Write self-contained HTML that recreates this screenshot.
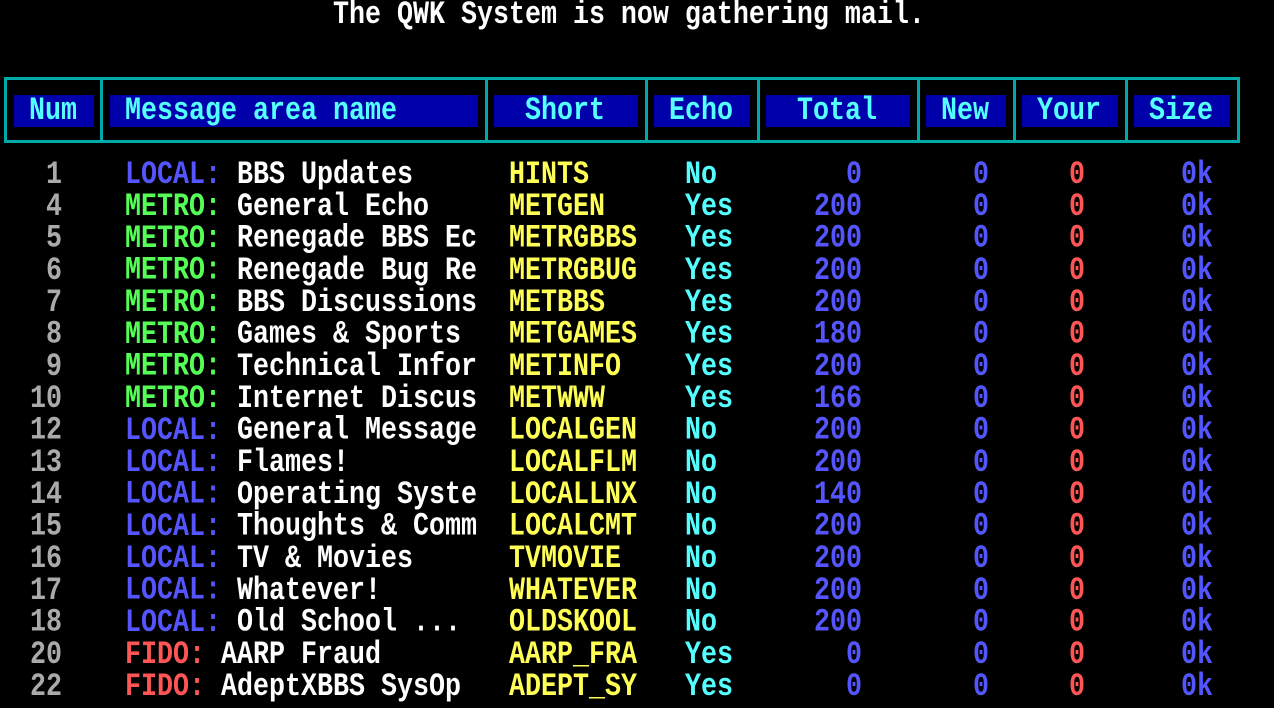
<!DOCTYPE html>
<html><head><meta charset="utf-8"><style>
body{margin:0;width:1274px;height:708px;background:#000;overflow:hidden;position:relative;font-family:"Liberation Mono",monospace;font-size:26.67px;font-weight:bold}
span{position:absolute;white-space:pre;line-height:26.667px;transform:scaleY(1.2);transform-origin:0 0}
div{position:absolute}
.b{background:#0000aa;height:32px;top:95px}
.v{background:#00aaaa;width:3px;top:77px;height:66px}
.h{color:#55ffff;top:96px}
.r{text-align:right}
</style></head><body>
<span style="left:333px;top:0px;color:#fff">The QWK System is now gathering mail.</span>
<div style="left:4px;top:77px;width:1235px;height:3px;background:#00aaaa"></div>
<div style="left:4px;top:140px;width:1235px;height:3px;background:#00aaaa"></div>
<div class="v" style="left:4px"></div><div class="v" style="left:100px"></div><div class="v" style="left:485px"></div><div class="v" style="left:645px"></div><div class="v" style="left:757px"></div><div class="v" style="left:917px"></div><div class="v" style="left:1013px"></div><div class="v" style="left:1125px"></div><div class="v" style="left:1237px"></div>
<div class="b" style="left:14px;width:80px"></div>
<div class="b" style="left:110px;width:368px"></div>
<div class="b" style="left:494px;width:144px"></div>
<div class="b" style="left:654px;width:96px"></div>
<div class="b" style="left:766px;width:144px"></div>
<div class="b" style="left:926px;width:80px"></div>
<div class="b" style="left:1022px;width:96px"></div>
<div class="b" style="left:1134px;width:96px"></div>
<span class="h" style="left:29px">Num</span>
<span class="h" style="left:125px">Message area name</span>
<span class="h" style="left:525px">Short</span>
<span class="h" style="left:669px">Echo</span>
<span class="h" style="left:797px">Total</span>
<span class="h" style="left:941px">New</span>
<span class="h" style="left:1037px">Your</span>
<span class="h" style="left:1149px">Size</span>
<span style="left:0;top:160px;width:62px;color:#aaa" class="r">1
4
5
6
7
8
9
10
12
13
14
15
16
17
18
20
22</span>
<span style="left:125px;top:160px;color:#5555ff">LOCAL:</span>
<span style="left:125px;top:192px;color:#55ff55">METRO:
METRO:
METRO:
METRO:
METRO:
METRO:
METRO:</span>
<span style="left:125px;top:416px;color:#5555ff">LOCAL:
LOCAL:
LOCAL:
LOCAL:
LOCAL:
LOCAL:
LOCAL:</span>
<span style="left:125px;top:640px;color:#ff5555">FIDO:
FIDO:</span>
<span style="left:237px;top:160px;color:#fff">BBS Updates
General Echo
Renegade BBS Ec
Renegade Bug Re
BBS Discussions
Games &amp; Sports
Technical Infor
Internet Discus
General Message
Flames!
Operating Syste
Thoughts &amp; Comm
TV &amp; Movies
Whatever!
Old School ...</span>
<span style="left:221px;top:640px;color:#fff">AARP Fraud
AdeptXBBS SysOp</span>
<span style="left:509px;top:160px;color:#ffff55">HINTS
METGEN
METRGBBS
METRGBUG
METBBS
METGAMES
METINFO
METWWW
LOCALGEN
LOCALFLM
LOCALLNX
LOCALCMT
TVMOVIE
WHATEVER
OLDSKOOL
AARP_FRA
ADEPT_SY</span>
<span style="left:685px;top:160px;color:#55ffff">No
Yes
Yes
Yes
Yes
Yes
Yes
Yes
No
No
No
No
No
No
No
Yes
Yes</span>
<span class="r" style="left:760px;width:102px;top:160px;color:#5555ff">0
200
200
200
200
180
200
166
200
200
140
200
200
200
200
0
0</span>
<span style="left:973px;top:160px;color:#5555ff">0
0
0
0
0
0
0
0
0
0
0
0
0
0
0
0
0</span>
<span style="left:1069px;top:160px;color:#ff5555">0
0
0
0
0
0
0
0
0
0
0
0
0
0
0
0
0</span>
<span style="left:1181px;top:160px;color:#5555ff">0k
0k
0k
0k
0k
0k
0k
0k
0k
0k
0k
0k
0k
0k
0k
0k
0k</span>
</body></html>
